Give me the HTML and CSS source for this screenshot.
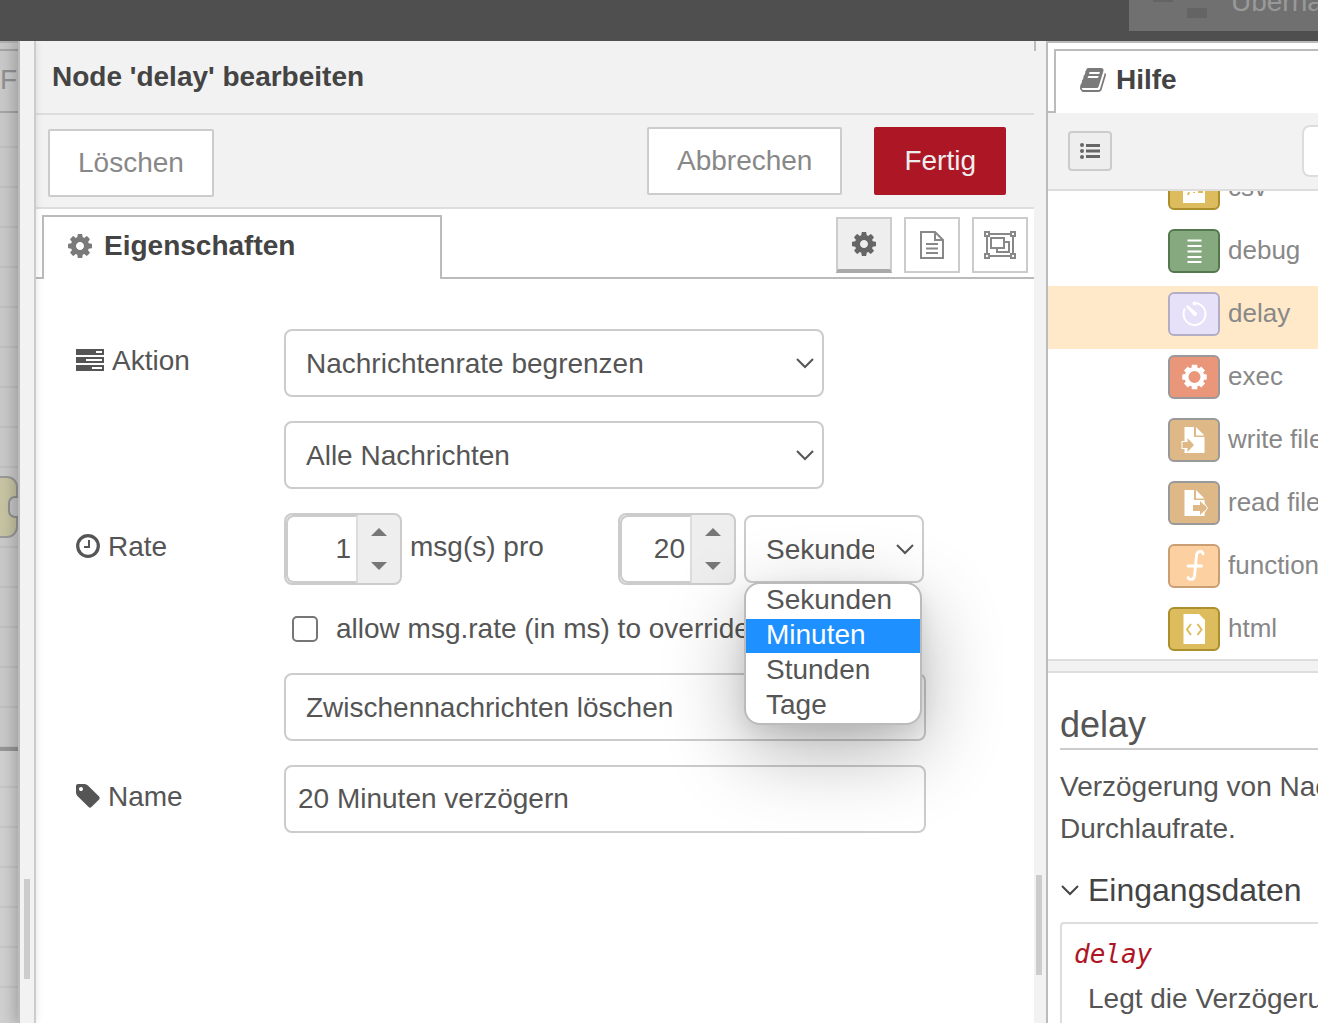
FILE: index.html
```html
<!DOCTYPE html>
<html lang="de">
<head>
<meta charset="utf-8">
<title>Node-RED</title>
<link rel="stylesheet" href="styles.css">
</head>
<body>
<svg class="defs" aria-hidden="true">
  <symbol id="cog" viewBox="0 128 1536 1536"><path d="M1024 896q0-106-75-181t-181-75-181 75-75 181 75 181 181 75 181-75 75-181zm512-109v222q0 12-8 23t-20 13l-185 28q-19 54-39 91 35 50 107 138 10 12 10 25t-9 23q-27 37-99 108t-94 71q-12 0-26-9l-138-108q-44 23-91 38-16 136-29 186-7 28-36 28h-222q-14 0-24.500-8.500t-11.500-21.500l-28-184q-49-16-90-37l-141 107q-10 9-25 9-14 0-25-11-126-114-165-168-7-10-7-23 0-12 8-23 15-21 51-66.500t54-70.500q-27-50-41-99l-183-27q-13-2-21-12.500t-8-23.500v-222q0-12 8-23t19-13l186-28q14-46 39-92-40-57-107-138-10-12-10-24 0-10 9-23 26-36 98.500-107.500t94.500-71.500q13 0 26 10l138 107q44-23 91-38 16-136 29-186 7-28 36-28h222q14 0 24.500 8.500t11.500 21.500l28 184q49 16 90 37l142-107q9-9 24-9 13 0 25 10 129 119 165 170 7 8 7 22 0 12-8 23-15 21-51 66.500t-54 70.500q26 50 41 98l183 28q13 2 21 12.500t8 23.500z"/></symbol>
  <symbol id="chevron" viewBox="0 0 18 12"><path d="M1 2l8 8 8-8" fill="none" stroke="currentColor" stroke-width="2"/></symbol>
</svg>

<header class="topbar">
  <button class="deploy" type="button">
    <svg width="56" height="32" viewBox="0 0 56 32" aria-hidden="true"><path d="M0 4h24v10H20v2H0zM34 22h20v10H34z" fill="#646464"/></svg>
    <span>Übernahme</span>
  </button>
</header>

<main class="main">
  <section class="workspace">
    <div class="flow-tab">F</div>
    <div class="canvas">
      <svg class="flow-node" width="18" height="64" viewBox="0 0 18 64" aria-hidden="true">
        <rect x="-30" y="2" width="47" height="60" rx="10" fill="#c5c3a2" stroke="#999" stroke-width="2"/>
        <rect x="9" y="22" width="20" height="20" rx="6" fill="#c4c4c4" stroke="#909090" stroke-width="2"/>
      </svg>
    </div>
    <div class="canvas-end"></div>
  </section>

  <div class="tray-separator"><span class="grip"></span></div>

  <section class="tray">
    <h2 class="tray-title">Node 'delay' bearbeiten</h2>
    <div class="tray-toolbar">
      <button class="btn btn-delete" type="button">Löschen</button>
      <div class="btn-group">
        <button class="btn" type="button">Abbrechen</button>
        <button class="btn primary" type="button">Fertig</button>
      </div>
    </div>

    <div class="tabs">
      <div class="tab-stub"></div>
      <a class="tab editor-tab" href="#eigenschaften"><svg width="24" height="24"><use href="#cog"/></svg>Eigenschaften</a>
      <div class="tab-actions">
        <button class="icon-btn active" type="button" aria-label="Eigenschaften"><svg width="24" height="24"><use href="#cog"/></svg></button>
        <button class="icon-btn" type="button" aria-label="Beschreibung">
          <svg width="26" height="30" viewBox="0 0 26 30" fill="none" stroke="currentColor" stroke-width="2"><path d="M2 2h14l8 8v18H2zM16 2v8h8M7 14h12M7 18.500h12M7 23h12"/></svg>
        </button>
        <button class="icon-btn" type="button" aria-label="Darstellung">
          <svg width="32" height="28" viewBox="0 0 32 28" fill="none" stroke="currentColor" stroke-width="2"><path d="M5 3h22M5 25h22M3 5v18M29 5v18M1 1h4v4H1zM27 1h4v4h-4zM1 23h4v4H1zM27 23h4v4h-4zM7 7h13v10H7zM20 11h5v10H13v-4"/></svg>
        </button>
      </div>
    </div>

    <form class="form">
      <label class="label" for="action">
        <svg width="28" height="22" viewBox="0 0 28 22" aria-hidden="true"><g fill="none" stroke="currentColor" stroke-width="2"><path d="M1 1h26v4H1zM1 9h26v4H1zM1 17h26v4H1z"/></g><path d="M0 0h20v6H0zM0 8h10v6H0zM0 16h16v6H0z" fill="currentColor"/></svg>
        Aktion
      </label>
      <div class="select wide"><select id="action"><option>Nachrichtenrate begrenzen</option></select><svg width="18" height="12"><use href="#chevron"/></svg></div>

      <div class="select wide offset"><select aria-label="Nachrichten"><option>Alle Nachrichten</option></select><svg width="18" height="12"><use href="#chevron"/></svg></div>

      <label class="label" for="rate">
        <svg width="24" height="24" viewBox="0 0 24 24" fill="none" stroke="currentColor" aria-hidden="true"><circle cx="12" cy="12" r="10.300" stroke-width="3.200"/><path d="M13 6v7H8" stroke-width="2"/></svg>
        Rate
      </label>
      <div class="rate">
        <div class="spinner">
          <input id="rate" type="text" value="1">
          <div class="spin-buttons">
            <button type="button" aria-label="Mehr"><svg width="16" height="8" viewBox="0 0 16 8"><path d="M0 8l8-8 8 8z"/></svg></button>
            <button type="button" aria-label="Weniger"><svg width="16" height="8" viewBox="0 0 16 8"><path d="M0 0l8 8 8-8z"/></svg></button>
          </div>
        </div>
        <label class="per" for="interval">msg(s) pro</label>
        <div class="spinner">
          <input id="interval" type="text" value="20">
          <div class="spin-buttons">
            <button type="button" aria-label="Mehr"><svg width="16" height="8" viewBox="0 0 16 8"><path d="M0 8l8-8 8 8z"/></svg></button>
            <button type="button" aria-label="Weniger"><svg width="16" height="8" viewBox="0 0 16 8"><path d="M0 0l8 8 8-8z"/></svg></button>
          </div>
        </div>
        <div class="select units">
          <select aria-label="Einheit"><option>Sekunden</option></select><svg width="18" height="12"><use href="#chevron"/></svg>
          <ul class="menu" role="listbox" aria-label="Einheit">
            <li role="option">Sekunden</li>
            <li role="option" class="selected" aria-selected="true">Minuten</li>
            <li role="option">Stunden</li>
            <li role="option">Tage</li>
          </ul>
        </div>
      </div>

      <div class="check offset">
        <input id="override" type="checkbox"><label for="override">allow msg.rate (in ms) to override</label>
      </div>

      <div class="select full offset"><select aria-label="Zwischennachrichten"><option>Zwischennachrichten löschen</option></select><svg width="18" height="12"><use href="#chevron"/></svg></div>

      <label class="label" for="name">
        <svg width="24" height="24" viewBox="0 128 1536 1536" fill="currentColor" aria-hidden="true"><path d="M448 448q0-53-37.500-90.500t-90.500-37.500-90.500 37.500-37.500 90.500 37.500 90.500 90.500 37.500 90.500-37.500 37.500-90.500zm1067 576q0 53-37 90l-491 492q-39 37-91 37-53 0-90-37l-715-716q-38-37-64.500-101t-26.500-117v-416q0-52 38-90t90-38h416q53 0 117 26.500t102 64.500l715 714q37 39 37 91z"/></svg>
        Name
      </label>
      <input class="text full" id="name" type="text" value="20 Minuten verzögern">
    </form>
  </section>

  <div class="sidebar-separator"><span class="grip"></span></div>

  <aside class="sidebar">
    <div class="sidebar-tabs">
      <div class="tab-stub"></div>
      <a class="tab sidebar-tab" href="#hilfe">
        <svg width="26" height="28" viewBox="0 0 1664 1792" aria-hidden="true"><path d="M1639 478q40 57 18 129l-275 906q-19 64-76.500 107.500t-122.500 43.500h-923q-77 0-148.500-53.500t-99.500-131.500q-24-67-2-127 0-4 3-27t4-37q1-8-3-21.500t-3-19.500q2-11 8-21t16.500-23.500 16.500-23.500q23-38 45-91.500t30-91.500q3-10 .5-30t-.5-28q3-11 17-28t17-23q21-36 42-92t25-90q1-9-2.500-32t.5-28q4-13 22-30.500t22-22.500q19-26 42.500-84.500t27.500-96.500q1-8-3-25.500t-2-26.500q2-8 9-18t18-23 17-21q8-12 16.500-30.500t15-35 16-36 19.500-32 26.500-23.500 36-11.500 47.500 5.500l-1 3q38-9 51-9h761q74 0 114 56t18 130l-274 906q-36 119-71.500 153.500t-128.500 34.500h-869q-27 0-38 15-11 16-1 43 24 70 144 70h923q29 0 56-15.500t35-41.500l300-987q7-22 5-57 38 15 59 43zm-1064 2q-4 13 2 22.500t20 9.500h608q13 0 25.500-9.500t16.500-22.500l21-64q4-13-2-22.500t-20-9.500h-608q-13 0-25.500 9.500t-16.500 22.500zm-83 256q-4 13 2 22.500t20 9.500h608q13 0 25.500-9.500t16.500-22.500l21-64q4-13-2-22.500t-20-9.500h-608q-13 0-25.500 9.500t-16.500 22.500z"/></svg>Hilfe</a>
    </div>
    <div class="sidebar-toolbar">
      <button class="list-btn" type="button" aria-label="Themen">
        <svg width="20" height="16" viewBox="0 0 20 16" fill="currentColor"><circle cx="2" cy="2" r="2"/><circle cx="2" cy="8" r="2"/><circle cx="2" cy="14" r="2"/><path d="M6 1h14v3H6zM6 6.500h14v3H6zM6 12h14v3H6z"/></svg>
      </button>
      <input class="search" type="search" aria-label="Suche">
    </div>
    <div class="topics">
      <ul class="topic-list">
        <li><span class="node yellow"><svg viewBox="2 2 48 40"><path d="M15 7h16l6 6v24H15z" fill="#fff"/><path d="M21 26l-1 3M26 26v1M30 26h5" stroke="#dcbc5c" stroke-width="2"/></svg></span>csv</li>
        <li><span class="node green"><svg viewBox="2 2 48 40"><path d="M19.500 11.500h14M19.500 17h14M19.500 22.500h14M19.500 28h14M19.500 33h14" stroke="#fff" stroke-width="2"/></svg></span>debug</li>
        <li class="current"><span class="node lilac"><svg viewBox="2 2 48 40"><path d="M26.500 11A11 11 0 1 1 17 16.500" fill="none" stroke="#fff" stroke-width="2"/><circle cx="26.500" cy="11.500" r="2"/><path d="M18 14.500l1.500-1.500 9 7.500a2 2 0 0 1-3 3z" fill="#fff"/></svg></span>delay</li>
        <li><span class="node salmon"><svg viewBox="2 2 48 40"><circle cx="26.500" cy="22" r="8" fill="none" stroke="#fff" stroke-width="4"/><g stroke="#fff" stroke-width="5.600"><path d="M26.500 9.800v4.200M26.500 30v4.200M14.300 22h4.200M34.500 22h4.200M17.900 13.400l3 3M32.100 27.600l3 3M35.100 13.400l-3 3M20.900 27.600l-3 3"/></g></svg></span>exec</li>
        <li><span class="node tan"><svg viewBox="2 2 48 40"><path d="M16.500 9h9.500v10h10.500v16H16.500v-4H13.500v-8h3zM28 9l8.500 8.500H28z" fill="#fff"/><path d="M14.500 24h5v-4l6.500 7-6.500 7v-4h-5z" fill="#deb887"/></svg></span>write file</li>
        <li><span class="node tan"><svg viewBox="2 2 48 40"><path d="M16.500 9h9.500v10h10.500v16H16.500zM28 9l8.500 8.500H28z" fill="#fff"/><path d="M25 24h7v-4l7 7-7 7v-4h-7z" fill="#deb887"/><path d="M35.500 21l4 6-4 6" fill="none" stroke="#fff"/></svg></span>read file</li>
        <li><span class="node orange"><svg viewBox="2 2 48 40"><path d="M35 10c0-4-6-3.500-6.500 1.500L26.500 32c-.5 4.500-6 4-6.500 1.500M20 22h13.500" fill="none" stroke="#fff" stroke-width="2.800" stroke-linecap="round"/></svg></span>function</li>
        <li><span class="node yellow"><svg viewBox="2 2 48 40"><path d="M15.500 7H31l6 6v24H15.500z" fill="#fff"/><path d="M23 17l-4 5.500 4 5.500M29.500 17l4 5.500-4 5.500" fill="none" stroke="#dcbc5c" stroke-width="2"/></svg></span>html</li>
      </ul>
    </div>
    <div class="splitter"></div>
    <article class="help">
      <h1>delay</h1>
      <p>Verzögerung von Nachrichten<br>Durchlaufrate.</p>
      <h3><svg width="20" height="12"><use href="#chevron"/></svg>Eingangsdaten</h3>
      <dl>
        <dt>delay</dt>
        <dd>Legt die Verzögerung</dd>
      </dl>
    </article>
  </aside>
</main>
</body>
</html>
```
FILE: styles.css
```css
* { box-sizing: border-box; }

body {
  margin: 0;
  height: 100vh;
  display: flex;
  flex-direction: column;
  overflow: hidden;
  font: 28px/42px "Liberation Sans", Arial, sans-serif;
  color: #555;
  background: #fff;
}

button, input, select { font: inherit; color: inherit; margin: 0; }
svg { flex: none; display: block; }
svg:not([fill]) { fill: currentColor; }
.defs { position: absolute; width: 0; height: 0; }
a { color: inherit; text-decoration: none; }

/* Top bar */
.topbar {
  flex: none;
  height: 41px;
  display: flex;
  justify-content: flex-end;
  align-items: flex-end;
  padding-bottom: 10px;
  overflow: hidden;
  background: #4f4f4f;
}
.deploy {
  flex: none;
  display: flex;
  align-items: center;
  gap: 22px;
  width: 189px;
  height: 60px;
  padding: 2px 0 0 24px;
  border: 0;
  overflow: hidden;
  color: #999;
  background: #707070;
}

.main { flex: 1; min-height: 0; display: flex; overflow: hidden; }

/* Workspace */
.workspace {
  flex: 0 0 18px;
  display: flex;
  flex-direction: column;
  overflow: hidden;
  background: #c8c8c8;
}
.flow-tab {
  flex: none;
  height: 72px;
  padding-top: 8px;
  line-height: 58px;
  color: #909090;
  border-top: 2px solid #b0b0b0;
  border-bottom: 2px solid #a4a4a4;
  background: linear-gradient(#a4a4a4, #a4a4a4) 0 6px / 100% 2px no-repeat;
}
.canvas {
  flex: none;
  height: 638px;
  padding-top: 362px;
  border-bottom: 4px solid #959595;
  background: repeating-linear-gradient(#c8c8c8 0 33px, #bfbfbf 33px 35px, #c8c8c8 35px 40px);
}
.canvas-end {
  flex: 1;
  background: repeating-linear-gradient(#cfcfcf 0 35px, #c6c6c6 35px 37px, #cfcfcf 37px 40px);
}

/* Separators */
.tray-separator {
  position: relative;
  z-index: 1;
  flex: 0 0 18px;
  padding: 838px 4px 0;
  border-left: 2px solid #bbb;
  border-right: 2px solid #ccc;
  background: #f2f2f2;
  box-shadow: -6px 0 12px rgba(0, 0, 0, .16), 2px 0 8px rgba(0, 0, 0, .05);
}
.sidebar-separator {
  flex: 0 0 12px;
  padding: 834px 2px 0;
  background: linear-gradient(#bbb, #bbb) 0 0 / 2px 10px no-repeat #f2f2f2;
}
.grip { display: block; width: 6px; height: 100px; background: #ccc; }

/* Edit tray */
.tray { flex: 1; min-width: 0; display: flex; flex-direction: column; }
.tray-title {
  margin: 0;
  padding: 0 16px;
  font-size: 28px;
  line-height: 72px;
  color: #444;
  background: #f2f2f2;
  border-bottom: 2px solid #ddd;
}
.tray-toolbar {
  display: flex;
  justify-content: space-between;
  height: 94px;
  padding: 12px 28px 10px 12px;
  background: #f2f2f2;
  border-bottom: 2px solid #ddd;
}
.btn {
  height: 68px;
  padding: 0 28px;
  border: 2px solid #ccc;
  border-radius: 2px;
  color: #888;
  background: #fff;
}
.btn-delete { align-self: flex-end; }
.btn-group { display: flex; align-items: flex-start; gap: 32px; }
.primary { color: #eee; background: #ad1625; border-color: #ad1625; }

.tabs { display: flex; height: 70px; padding-top: 6px; }
.tab-stub { flex: 0 0 6px; border-bottom: 2px solid #bbb; }
.tab {
  display: flex;
  align-items: center;
  height: 64px;
  line-height: 56px;
  padding-bottom: 4px;
  font-weight: bold;
  color: #444;
  background: #fff;
  border: 2px solid #bbb;
  border-bottom: 0;
}
.tab svg { color: #7a7a7a; }
.editor-tab { flex: 0 0 400px; gap: 12px; padding-left: 24px; }
.tab-actions {
  flex: 1;
  display: flex;
  justify-content: flex-end;
  gap: 12px;
  padding: 2px 6px 0 0;
  border-bottom: 2px solid #bbb;
}
.icon-btn {
  display: flex;
  align-items: center;
  justify-content: center;
  width: 56px;
  height: 56px;
  padding: 0;
  color: #888;
  background: #fff;
  border: 2px solid #ccc;
}
.icon-btn.active { color: #666; background: #eee; border-bottom: 4px solid #aaa; }

/* Form */
.form {
  display: grid;
  grid-template-columns: 208px 642px;
  row-gap: 24px;
  padding: 50px 40px;
}
.offset { grid-column: 2; }
.label { display: flex; align-items: center; gap: 8px; padding-bottom: 4px; }
.label svg { margin-bottom: 2px; }
.select { display: grid; align-items: center; height: 68px; }
.select > select, .select > svg { grid-area: 1 / 1; }
.select > svg { justify-self: end; margin-right: 10px; pointer-events: none; }
.select > select {
  appearance: none;
  width: 100%;
  height: 68px;
  padding: 2px 48px 0 20px;
  border: 2px solid #ccc;
  border-radius: 8px;
  background: #fff;
}
.wide { width: 540px; }
.full { width: 642px; }
.text {
  height: 68px;
  padding: 0 12px;
  border: 2px solid #ccc;
  border-radius: 8px;
  background: #fff;
}
.rate { display: flex; align-items: center; gap: 8px; }
.spinner {
  display: flex;
  width: 118px;
  height: 72px;
  border: 2px solid #ccc;
  border-radius: 8px;
  overflow: hidden;
  background: #eee;
}
.spinner input {
  width: 72px;
  height: 68px;
  padding: 0 5px;
  text-align: right;
  border: 2px solid #ccc;
  border-right-color: #ddd;
  border-radius: 8px 0 0 8px;
  background: #fff;
}
.spin-buttons { flex: 1; display: flex; flex-direction: column; }
.spin-buttons button {
  flex: 1;
  display: flex;
  align-items: center;
  justify-content: center;
  padding: 0;
  border: 0;
  color: #777;
  background: none;
}
.per { width: 200px; padding-bottom: 4px; }
.units { position: relative; width: 180px; }
.menu {
  position: absolute;
  z-index: 2;
  top: calc(100% - 1px);
  left: 0;
  right: 2px;
  display: grid;
  row-gap: 1px;
  margin: 0;
  padding: 0;
  list-style: none;
  overflow: hidden;
  background: #fff;
  border: 2px solid #bbb;
  border-radius: 16px;
  box-shadow: 0 26px 80px rgba(0, 0, 0, .3), 0 8px 20px rgba(0, 0, 0, .08);
}
.menu li { padding: 0 20px 2px; line-height: 32px; }
.menu .selected { color: #fff; background: #1e90ff; }
.check { display: flex; align-items: center; gap: 18px; height: 40px; padding-left: 8px; }
.check input {
  appearance: none;
  width: 26px;
  height: 26px;
  border: 2px solid #767676;
  border-radius: 5px;
  background: #fff;
}

/* Sidebar */
.sidebar {
  flex: 0 0 272px;
  display: flex;
  flex-direction: column;
  overflow: hidden;
  border-left: 2px solid #bbb;
}
.sidebar-tabs { flex: none; display: flex; height: 72px; padding-top: 6px; border-top: 2px solid #bbb; }
.sidebar-tab { flex: 1; gap: 10px; padding-left: 24px; border-right: 0; }
.sidebar-toolbar {
  flex: none;
  display: flex;
  align-items: center;
  justify-content: space-between;
  height: 78px;
  padding-left: 20px;
  background: #f2f2f2;
  border-bottom: 2px solid #ddd;
}
.list-btn {
  display: flex;
  align-items: center;
  justify-content: center;
  width: 44px;
  height: 40px;
  padding: 0;
  color: #666;
  background: #eee;
  border: 2px solid #ccc;
  border-radius: 4px;
}
.search {
  width: 16px;
  height: 52px;
  padding: 0;
  border: 2px solid #ddd;
  border-right: 0;
  border-radius: 8px 0 0 8px;
  background: #fff;
}
.topics { flex: none; height: 468px; overflow: hidden; }
/* the list is scrolled half a row down */
.topic-list { margin: -31px 0 0; padding: 0; list-style: none; }
.topic-list li {
  display: flex;
  gap: 8px;
  height: 63px;
  padding: 6px 0 0 120px;
  font-size: 26px;
  line-height: 42px;
  white-space: nowrap;
  color: #888;
}
.topic-list .current { background: #ffe9c8; }
.node { flex: none; width: 52px; height: 44px; border: 2px solid #999; border-radius: 6px; color: #fff; }
.node svg { width: 48px; height: 40px; }
.yellow { background: #dcbc5c; border-color: #ab8f2d; }
.green { background: #87a980; border-color: #54774e; }
.lilac { background: #e6e0f8; border-color: #b3aec5; }
.salmon { background: #e9967a; }
.tan { background: #deb887; }
.orange { background: #fdd0a2; border-color: #c99f73; }
.splitter {
  flex: none;
  height: 14px;
  background: #f2f2f2;
  border-top: 2px solid #ddd;
  border-bottom: 2px solid #ddd;
}
.help { flex: 1; min-height: 0; padding: 29px 0 0 12px; white-space: nowrap; }
.help h1 {
  margin: 0 0 16px;
  font-size: 36px;
  font-weight: normal;
  line-height: 46px;
  border-bottom: 2px solid #ccc;
}
.help p { margin: 0 0 20px; }
.help h3 {
  display: flex;
  align-items: center;
  gap: 8px;
  margin: 0 0 12px;
  font-size: 32px;
  font-weight: normal;
  line-height: 40px;
  color: #444;
}
.help dl {
  margin: 0;
  padding: 8px 12px;
  border: 2px solid #ddd;
  border-right: 0;
  border-radius: 4px 0 0 0;
}
.help dt { font: italic 26px/44px "DejaVu Sans Mono", monospace; color: #ad1625; }
.help dd { margin: 2px 0 0 14px; }
```
